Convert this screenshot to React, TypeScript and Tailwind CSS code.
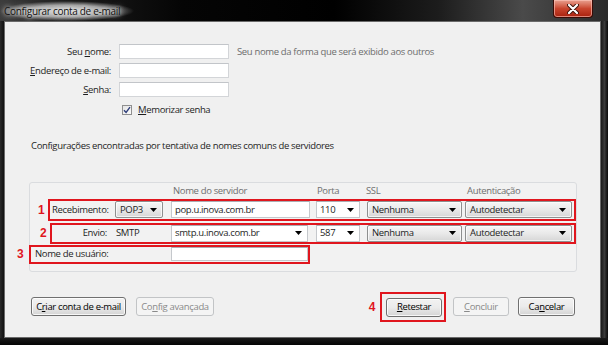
import React from "react";

const Arrow = () => (
  <svg width="7" height="4" viewBox="0 0 7 4" className="shrink-0">
    <polygon points="0,0 7,0 3.5,4" fill="#000" />
  </svg>
);

const U = ({ children }: { children: React.ReactNode }) => (
  <span className="underline underline-offset-[1px]">{children}</span>
);

const Combo = ({ w, text }: { w: string; text: string }) => (
  <div
    className={`${w} h-[17px] flex items-center justify-between pl-[4px] pr-[5px] border border-[#8e8f8f] rounded-[2px] bg-gradient-to-b from-[#f6f6f6] via-[#e9e9e9] to-[#d6d6d6] shadow-[inset_0_0_0_1px_rgba(255,255,255,0.7)]`}
  >
    <span>{text}</span>
    <Arrow />
  </div>
);

const EditCombo = ({ w, text }: { w: string; text: string }) => (
  <div
    className={`${w} h-[17px] flex items-center justify-between pl-[3px] pr-[5px] border border-[#c5c8cc] border-t-[#abadb3] bg-white`}
  >
    <span>{text}</span>
    <Arrow />
  </div>
);

const TextBox = ({ w, h, text }: { w: string; h: string; text?: string }) => (
  <div
    className={`${w} ${h} flex items-center pl-[3px] border border-[#c5c8cc] border-t-[#abadb3] bg-white`}
  >
    {text}
  </div>
);

const Btn = ({
  w,
  disabled,
  children,
}: {
  w: string;
  disabled?: boolean;
  children: React.ReactNode;
}) =>
  disabled ? (
    <div
      className={`${w} h-[19px] flex items-center justify-center rounded-[3px] border border-[#c2c4c6] bg-[#f4f4f4] text-[#8a8a8a]`}
    >
      {children}
    </div>
  ) : (
    <div
      className={`${w} h-[19px] flex items-center justify-center rounded-[3px] border border-[#707070] bg-gradient-to-b from-[#f2f2f2] via-[#ebebeb] to-[#d4d4d4] shadow-[inset_0_0_0_1px_rgba(255,255,255,0.8)] text-black`}
    >
      {children}
    </div>
  );

const Num = ({ n, cls }: { n: string; cls: string }) => (
  <span
    className={`absolute ${cls} top-1/2 -translate-y-1/2 text-[#e0161e] font-bold text-[12px] leading-none font-['Liberation_Sans',sans-serif]`}
  >
    {n}
  </span>
);

export default function App() {
  return (
    <div className="w-[608px] h-[345px] bg-black flex flex-col overflow-hidden font-['Open_Sans',sans-serif] text-[9.5px] tracking-[-0.35px] text-[#1e1e1e] leading-none">
      {/* Title bar */}
      <div className="h-[21px] shrink-0 flex items-start overflow-hidden bg-[linear-gradient(90deg,#3c3c3c_0%,#1a1a1a_12%,#050505_30%,#000_55%,#1c1c1c_72%,#4a4a4a_86%,#2a2a2a_100%)]">
        <span className="mt-[1px] pl-[4px] pr-[14px] pt-[5px] pb-[5px] text-[10px] text-[#111] tracking-[-0.3px] bg-[radial-gradient(ellipse_closest-side,rgba(235,235,235,0.9)_0%,rgba(200,200,200,0.75)_60%,rgba(120,120,120,0)_100%)] [text-shadow:0_0_4px_#fff,0_0_8px_#eee]">
          Configurar conta de e-mail
        </span>
        <div className="ml-auto mr-[15px] w-[40px] h-[18px] rounded-b-[4px] border border-t-0 border-[#3a0b05] bg-gradient-to-b from-[#e8a090] via-[#c9452e] to-[#a81f0c] shadow-[inset_0_0_0_1px_rgba(255,200,190,0.6)] flex items-center justify-center">
          <svg width="12" height="10" viewBox="0 0 12 10">
            <path d="M2 1 L10 9 M10 1 L2 9" stroke="#3a1008" strokeWidth="4" strokeLinecap="round" />
            <path d="M2 1 L10 9 M10 1 L2 9" stroke="#fff" strokeWidth="2.2" strokeLinecap="round" />
          </svg>
        </div>
      </div>

      {/* Body row */}
      <div className="flex h-[317px] shrink-0">
        <div className="w-[4px] bg-gradient-to-r from-[#2a2a2a] to-[#111]" />
        <div className="w-[597px] bg-[#f0f0f0] border border-[#6a6a6a] flex flex-col">
          {/* Form */}
          <div className="flex flex-col gap-[4px] pt-[22px]">
            <div className="flex items-center h-[15px]">
              <span className="w-[106px] text-right">
                Seu <U>n</U>ome:
              </span>
              <div className="ml-[8px] w-[110px] h-[15px] border border-[#d3d5d8] border-t-[#c2c5c9] bg-white" />
              <span className="ml-[8px] text-[#6d6d6d]">
                Seu nome da forma que será exibido aos outros
              </span>
            </div>
            <div className="flex items-center h-[15px]">
              <span className="w-[106px] text-right">
                <U>E</U>ndereço de e-mail:
              </span>
              <div className="ml-[8px] w-[110px] h-[15px] border border-[#d3d5d8] border-t-[#c2c5c9] bg-white" />
            </div>
            <div className="flex items-center h-[15px]">
              <span className="w-[106px] text-right">
                <U>S</U>enha:
              </span>
              <div className="ml-[8px] w-[110px] h-[15px] border border-[#d3d5d8] border-t-[#c2c5c9] bg-white" />
            </div>
            <div className="flex items-center h-[11px] mt-[3px] pl-[117px]">
              <div className="w-[10px] h-[10px] border border-[#8f8f8f] bg-gradient-to-br from-[#e4e4e4] to-[#fbfbfb] flex items-center justify-center">
                <svg width="8" height="8" viewBox="0 0 8 8">
                  <path d="M1 4.2 L3.1 6.5 L7 1.2" stroke="#2e3e7a" strokeWidth="1.4" fill="none" />
                </svg>
              </div>
              <span className="ml-[6px]">
                <U>M</U>emorizar senha
              </span>
            </div>
          </div>

          <div className="mt-[26px] ml-[26px]">
            Configurações encontradas por tentativa de nomes comuns de servidores
          </div>

          {/* Panel */}
          <div className="mt-[31px] ml-[24px] w-[548px] h-[90px] border border-[#dadcdf] rounded-[3px] bg-[#f2f2f2] flex flex-col">
            <div className="h-[16px] flex items-center text-[#6f6f6f]">
              <span className="pl-[143px] w-[287px]">Nome do servidor</span>
              <span className="w-[49px]">Porta</span>
              <span className="w-[101px]">SSL</span>
              <span>Autenticação</span>
            </div>

            {/* Row 1 */}
            <div className="relative ml-[18px] w-[528px] h-[22px] border-2 border-[#e0161e] flex items-center">
              <Num n="1" cls="left-[-12px]" />
              <span className="w-[65px] pl-[2px]">Recebimento:</span>
              <Combo w="w-[48px]" text="POP3" />
              <div className="ml-[8px]">
                <TextBox w="w-[139px]" h="h-[17px]" text="pop.u.inova.com.br" />
              </div>
              <div className="ml-[6px]">
                <EditCombo w="w-[44px]" text="110" />
              </div>
              <div className="ml-[7px]">
                <Combo w="w-[95px]" text="Nenhuma" />
              </div>
              <div className="ml-[3px]">
                <Combo w="w-[107px]" text="Autodetectar" />
              </div>
            </div>

            {/* Row 2 */}
            <div className="relative mt-[2px] ml-[20px] w-[526px] h-[21px] border-2 border-[#e0161e] flex items-center">
              <Num n="2" cls="left-[-12px]" />
              <span className="w-[55px] text-right">Envio:</span>
              <span className="w-[64px] pl-[9px]">SMTP</span>
              <EditCombo w="w-[137px]" text="smtp.u.inova.com.br" />
              <div className="ml-[8px]">
                <EditCombo w="w-[44px]" text="587" />
              </div>
              <div className="ml-[7px]">
                <Combo w="w-[95px]" text="Nenhuma" />
              </div>
              <div className="ml-[3px]">
                <Combo w="w-[107px]" text="Autodetectar" />
              </div>
            </div>

            {/* Row 3 */}
            <div className="relative mt-[1px] ml-[-1px] w-[281px] h-[19px] border-2 border-[#e0161e] flex items-center">
              <Num n="3" cls="left-[-14px]" />
              <span className="w-[140px] pl-[4px]">Nome de usuário:</span>
              <TextBox w="w-[137px]" h="h-[14px]" />
            </div>
          </div>

          {/* Buttons */}
          <div className="mt-[20px] flex items-center pl-[26px] pr-[25px]">
            <Btn w="w-[95px]">
              C<U>r</U>iar conta de e-mail
            </Btn>
            <div className="ml-[10px]">
              <Btn w="w-[78px]" disabled>
                Co<U>n</U>fig avançada
              </Btn>
            </div>
            <span className="ml-auto mr-[5px] text-[#e0161e] font-bold text-[12px] font-['Liberation_Sans',sans-serif]">
              4
            </span>
            <div className="border-2 border-[#e0161e] pl-[4px] pr-[2px] pt-[4px] pb-[3px]">
              <Btn w="w-[56px]">
                <U>R</U>etestar
              </Btn>
            </div>
            <div className="ml-[7px]">
              <Btn w="w-[56px]" disabled>
                <U>C</U>oncluir
              </Btn>
            </div>
            <div className="ml-[9px]">
              <Btn w="w-[57px]">
                Ca<U>n</U>celar
              </Btn>
            </div>
          </div>
        </div>
        <div className="w-[7px] bg-gradient-to-r from-[#1a1a1a] via-[#3a3a3a] to-[#0a0a0a]" />
      </div>
      <div className="flex-1 bg-gradient-to-b from-[#1a1a1a] to-[#050505]" />
    </div>
  );
}
